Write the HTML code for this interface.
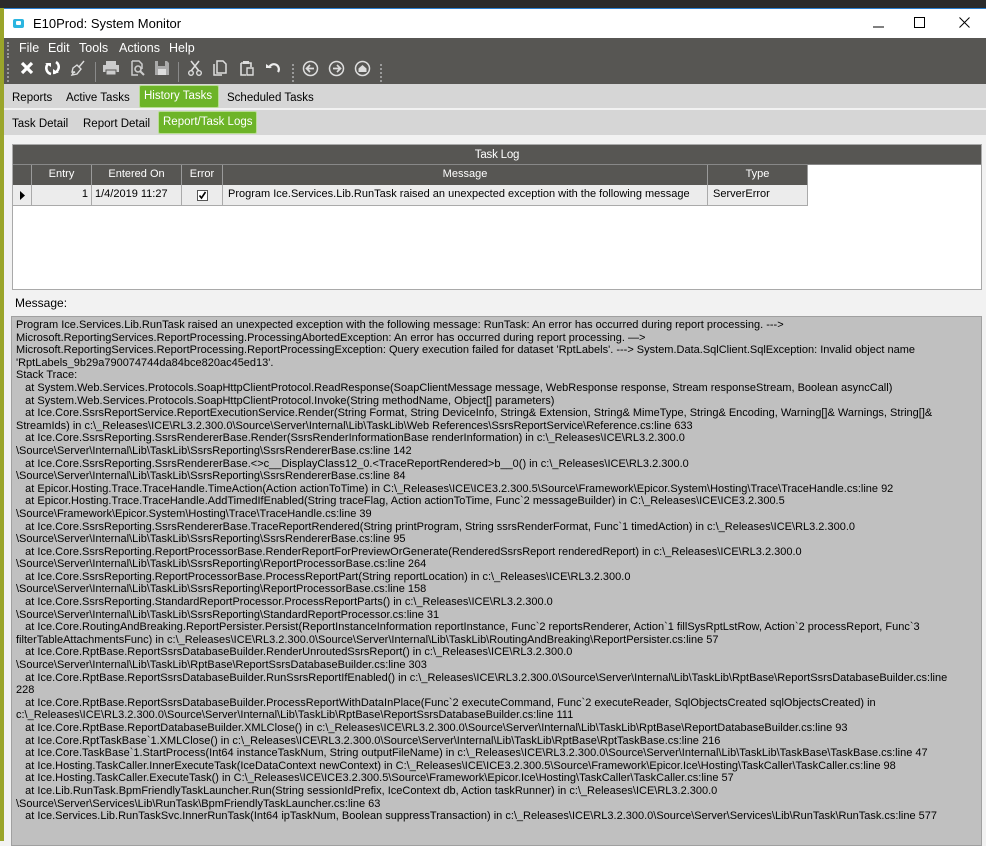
<!DOCTYPE html>
<html><head><meta charset="utf-8">
<style>
*{margin:0;padding:0;box-sizing:border-box}
body{width:986px;height:841px;overflow:hidden;background:#f2f2f2;font-family:"Liberation Sans",Arial,sans-serif;position:relative}
.abs{position:absolute}
#top{left:0;top:0;width:986px;height:8px;background:#2b2b2b}
#lstrip{left:0;top:8px;width:4px;height:833px;background:#9aa52a}
#title{left:4px;top:8px;width:982px;height:30px;background:#fff;border-top:1px solid #2a7fd0}
#title .t{position:absolute;left:29px;top:7px;font-size:13px;color:#000}
#title .ic{position:absolute;left:9px;top:10px;width:11px;height:9px;background:#2bb5e0;border-radius:2px}
#title .ic:after{content:"";position:absolute;left:3px;top:2px;width:5px;height:4px;background:#fff;border-radius:1px}
#menubar{left:4px;top:38px;width:982px;height:46px;background:#575653}
.menu{position:absolute;top:3px;font-size:12.5px;color:#fff}
.grip{position:absolute;width:2px;border-left:2px dotted #9a9a9a}
.sep{position:absolute;top:24px;width:1px;height:20px;background:#8a8a8a}
.ico{position:absolute;top:22px}
#tabs{left:4px;top:84px;width:982px;height:25px;background:#d6d6d6}
#tabs2{left:4px;top:110px;width:982px;height:25px;background:#d6d6d6}
#div{left:4px;top:108px;width:982px;height:2px;background:#f2f2f2}
.tab{position:absolute;font-size:11.5px;color:#000;top:8px}
.tsel{position:absolute;background:#6db428;border:1px solid #b9dd95;color:#fff;font-size:11.5px;padding:4px 0 0 4px;border-radius:2px}
#grid{left:12px;top:144px;width:970px;height:146px;background:#fff;border:1px solid #a9a9a9}
.hd{background:#575653;color:#fff;font-size:11.5px;letter-spacing:-.2px}
.cell{position:absolute;height:20px;border-right:1px solid #9a9a9a;font-size:11px;letter-spacing:0;line-height:18px}
#msglbl{left:15px;top:296px;font-size:12px;color:#000}
#msg{left:11px;top:316px;width:971px;height:530px;background:#c0c0c0;border:1px solid #a0a0a0;padding:2px 0 0 4px;font-size:11px;letter-spacing:0;line-height:12.6px;color:#000;white-space:pre;overflow:hidden}
</style></head><body>
<div class="abs" id="top"></div>
<div class="abs" id="lstrip"></div>
<div class="abs" id="title"><div class="ic"></div><div class="t">E10Prod: System Monitor</div>
<svg style="position:absolute;left:869px;top:12px" width="12" height="12"><line x1="0" y1="6" x2="11" y2="6" stroke="#000"/></svg>
<svg style="position:absolute;left:910px;top:8px" width="12" height="12"><rect x=".5" y=".5" width="10" height="10" fill="none" stroke="#000"/></svg>
<svg style="position:absolute;left:955px;top:8px" width="12" height="12"><path d="M.5 .5L10.5 10.5M10.5 .5L.5 10.5" stroke="#000"/></svg>
</div>
<div class="abs" id="menubar">
<div class="grip" style="left:3px;top:4px;height:16px"></div>
<span class="menu" style="left:15px">File</span><span class="menu" style="left:44px">Edit</span><span class="menu" style="left:75px">Tools</span><span class="menu" style="left:115px">Actions</span><span class="menu" style="left:165px">Help</span>
<div class="grip" style="left:3px;top:26px;height:18px"></div>
<svg class="ico" style="left:15px" width="16" height="16"><path d="M3 3L13 13M13 3L3 13" stroke="#fff" stroke-width="3.2"/></svg>
<svg class="ico" style="left:40px" width="16" height="16"><path d="M4 4A6 6 0 0 0 7 14M12 2A6 6 0 0 1 9 13" stroke="#fff" stroke-width="2.6" fill="none"/><path d="M1 3h6v4z M15 13H9V9z" fill="#fff"/></svg>
<svg class="ico" style="left:66px" width="16" height="16"><path d="M14 1L9 7M3 8l4-3 4 4-4 5-5 1 1-2 2-1-3 0z" stroke="#ddd" stroke-width="1.4" fill="none"/></svg>
<div class="sep" style="left:91px"></div>
<svg class="ico" style="left:98px" width="18" height="16"><rect x="4" y="1" width="10" height="4" fill="#ccc"/><rect x="1" y="5" width="16" height="7" fill="#ccc"/><rect x="4" y="10" width="10" height="5" fill="#ccc" stroke="#575653"/></svg>
<svg class="ico" style="left:125px" width="16" height="16"><path d="M3 1h7l3 3v5M3 1v14h6" stroke="#ccc" stroke-width="1.5" fill="none"/><circle cx="9" cy="9" r="3" stroke="#ccc" stroke-width="1.6" fill="none"/><path d="M11 11l4 4" stroke="#ccc" stroke-width="2"/></svg>
<svg class="ico" style="left:150px" width="16" height="16"><path d="M1 1h12l2 2v12H1z" fill="#aaa"/><rect x="4" y="1" width="7" height="5" fill="#575653"/><rect x="4" y="9" width="8" height="6" fill="#ddd"/></svg>
<div class="sep" style="left:174px"></div>
<svg class="ico" style="left:183px" width="16" height="16"><path d="M4 1l8 10M12 1L4 11" stroke="#ddd" stroke-width="1.6"/><circle cx="4" cy="13" r="2.3" stroke="#ddd" fill="none" stroke-width="1.4"/><circle cx="12" cy="13" r="2.3" stroke="#ddd" fill="none" stroke-width="1.4"/></svg>
<svg class="ico" style="left:208px" width="16" height="16"><path d="M5 1h6l3 3v9H5z M2 4v11h8" stroke="#ddd" stroke-width="1.5" fill="none"/></svg>
<svg class="ico" style="left:235px" width="16" height="16"><path d="M2 3h10v4M2 3v12h5" stroke="#ddd" stroke-width="1.6" fill="none"/><rect x="4" y="1" width="6" height="3" fill="#ddd"/><path d="M8 8h6v7H8z" stroke="#ddd" stroke-width="1.4" fill="none"/></svg>
<svg class="ico" style="left:261px" width="16" height="16"><path d="M4 8a5 5 0 1 1 9 4" stroke="#eee" stroke-width="2.2" fill="none"/><path d="M1 4l6 4H1z" fill="#eee"/></svg>
<div class="grip" style="left:288px;top:26px;height:18px"></div>
<svg class="ico" style="left:298px" width="17" height="17"><circle cx="8.5" cy="8.5" r="7" stroke="#ddd" stroke-width="1.5" fill="none"/><path d="M12 8.5H5M8 5l-3.5 3.5L8 12" stroke="#ddd" stroke-width="1.7" fill="none"/></svg>
<svg class="ico" style="left:324px" width="17" height="17"><circle cx="8.5" cy="8.5" r="7" stroke="#ddd" stroke-width="1.5" fill="none"/><path d="M5 8.5h7M9 5l3.5 3.5L9 12" stroke="#ddd" stroke-width="1.7" fill="none"/></svg>
<svg class="ico" style="left:350px" width="17" height="17"><circle cx="8.5" cy="8.5" r="7" stroke="#ddd" stroke-width="1.5" fill="none"/><path d="M4.5 8.5L8.5 5l4 3.5V12h-8z" fill="#ddd"/></svg>
<div class="grip" style="left:376px;top:26px;height:18px"></div>
</div>
<div class="abs" id="tabs">
<span class="tab" style="left:8px">Reports</span><span class="tab" style="left:62px">Active Tasks</span>
<div class="tsel" style="left:135px;top:1px;width:80px;height:23px">History Tasks</div>
<span class="tab" style="left:223px">Scheduled Tasks</span>
</div>
<div class="abs" id="div"></div>
<div class="abs" id="tabs2">
<span class="tab" style="left:8px;top:8px">Task Detail</span><span class="tab" style="left:79px;top:8px">Report Detail</span>
<div class="tsel" style="left:154px;top:1px;width:99px;height:23px">Report/Task Logs</div>
</div>
<div class="abs" id="grid">
<div class="abs hd" style="left:0;top:0;width:968px;height:20px;text-align:center;line-height:20px;border-bottom:1px solid #888">Task Log</div>
<div class="abs hd" style="left:0;top:20px;width:795px;height:20px"></div>
<div class="cell hd" style="left:0;top:20px;width:19px"></div>
<div class="cell hd" style="left:19px;top:20px;width:60px;text-align:center">Entry</div>
<div class="cell hd" style="left:79px;top:20px;width:90px;text-align:center">Entered On</div>
<div class="cell hd" style="left:169px;top:20px;width:41px;text-align:center">Error</div>
<div class="cell hd" style="left:210px;top:20px;width:485px;text-align:center">Message</div>
<div class="cell hd" style="left:695px;top:20px;width:100px;text-align:center">Type</div>
<div class="abs" style="left:0;top:40px;width:795px;height:21px;background:#ececec;border-bottom:1px solid #aaa"></div>
<div class="cell" style="left:0;top:40px;width:19px;border-color:#aaa"><svg style="position:absolute;left:7px;top:6px" width="5" height="9"><path d="M0 0l5 4.5L0 9z" fill="#000"/></svg></div>
<div class="cell" style="left:19px;top:40px;width:60px;text-align:right;padding-right:3px;border-color:#aaa">1</div>
<div class="cell" style="left:79px;top:40px;width:90px;padding-left:3px;border-color:#aaa">1/4/2019 11:27</div>
<div class="cell" style="left:169px;top:40px;width:41px;border-color:#aaa"><svg style="position:absolute;left:15px;top:5px" width="11" height="11"><rect x=".5" y=".5" width="10" height="10" fill="#fff" stroke="#555"/><path d="M2.5 5.5l2 2.5 4-6" stroke="#000" stroke-width="1.6" fill="none"/></svg></div>
<div class="cell" style="left:210px;top:40px;width:485px;padding-left:5px;border-color:#aaa;white-space:nowrap;overflow:hidden">Program Ice.Services.Lib.RunTask raised an unexpected exception with the following message</div>
<div class="cell" style="left:695px;top:40px;width:100px;padding-left:5px;border-color:#aaa">ServerError</div>
</div>
<div class="abs" id="msglbl">Message:</div>
<div class="abs" id="msg">Program Ice.Services.Lib.RunTask raised an unexpected exception with the following message: RunTask: An error has occurred during report processing. ---&gt;
Microsoft.ReportingServices.ReportProcessing.ProcessingAbortedException: An error has occurred during report processing. —&gt;
Microsoft.ReportingServices.ReportProcessing.ReportProcessingException: Query execution failed for dataset 'RptLabels'. ---&gt; System.Data.SqlClient.SqlException: Invalid object name
'RptLabels_9b29a790074744da84bce820ac45ed13'.
Stack Trace:
   at System.Web.Services.Protocols.SoapHttpClientProtocol.ReadResponse(SoapClientMessage message, WebResponse response, Stream responseStream, Boolean asyncCall)
   at System.Web.Services.Protocols.SoapHttpClientProtocol.Invoke(String methodName, Object[] parameters)
   at Ice.Core.SsrsReportService.ReportExecutionService.Render(String Format, String DeviceInfo, String&amp; Extension, String&amp; MimeType, String&amp; Encoding, Warning[]&amp; Warnings, String[]&amp;
StreamIds) in c:\_Releases\ICE\RL3.2.300.0\Source\Server\Internal\Lib\TaskLib\Web References\SsrsReportService\Reference.cs:line 633
   at Ice.Core.SsrsReporting.SsrsRendererBase.Render(SsrsRenderInformationBase renderInformation) in c:\_Releases\ICE\RL3.2.300.0
\Source\Server\Internal\Lib\TaskLib\SsrsReporting\SsrsRendererBase.cs:line 142
   at Ice.Core.SsrsReporting.SsrsRendererBase.&lt;&gt;c__DisplayClass12_0.&lt;TraceReportRendered&gt;b__0() in c:\_Releases\ICE\RL3.2.300.0
\Source\Server\Internal\Lib\TaskLib\SsrsReporting\SsrsRendererBase.cs:line 84
   at Epicor.Hosting.Trace.TraceHandle.TimeAction(Action actionToTime) in C:\_Releases\ICE\ICE3.2.300.5\Source\Framework\Epicor.System\Hosting\Trace\TraceHandle.cs:line 92
   at Epicor.Hosting.Trace.TraceHandle.AddTimedIfEnabled(String traceFlag, Action actionToTime, Func`2 messageBuilder) in C:\_Releases\ICE\ICE3.2.300.5
\Source\Framework\Epicor.System\Hosting\Trace\TraceHandle.cs:line 39
   at Ice.Core.SsrsReporting.SsrsRendererBase.TraceReportRendered(String printProgram, String ssrsRenderFormat, Func`1 timedAction) in c:\_Releases\ICE\RL3.2.300.0
\Source\Server\Internal\Lib\TaskLib\SsrsReporting\SsrsRendererBase.cs:line 95
   at Ice.Core.SsrsReporting.ReportProcessorBase.RenderReportForPreviewOrGenerate(RenderedSsrsReport renderedReport) in c:\_Releases\ICE\RL3.2.300.0
\Source\Server\Internal\Lib\TaskLib\SsrsReporting\ReportProcessorBase.cs:line 264
   at Ice.Core.SsrsReporting.ReportProcessorBase.ProcessReportPart(String reportLocation) in c:\_Releases\ICE\RL3.2.300.0
\Source\Server\Internal\Lib\TaskLib\SsrsReporting\ReportProcessorBase.cs:line 158
   at Ice.Core.SsrsReporting.StandardReportProcessor.ProcessReportParts() in c:\_Releases\ICE\RL3.2.300.0
\Source\Server\Internal\Lib\TaskLib\SsrsReporting\StandardReportProcessor.cs:line 31
   at Ice.Core.RoutingAndBreaking.ReportPersister.Persist(ReportInstanceInformation reportInstance, Func`2 reportsRenderer, Action`1 fillSysRptLstRow, Action`2 processReport, Func`3
filterTableAttachmentsFunc) in c:\_Releases\ICE\RL3.2.300.0\Source\Server\Internal\Lib\TaskLib\RoutingAndBreaking\ReportPersister.cs:line 57
   at Ice.Core.RptBase.ReportSsrsDatabaseBuilder.RenderUnroutedSsrsReport() in c:\_Releases\ICE\RL3.2.300.0
\Source\Server\Internal\Lib\TaskLib\RptBase\ReportSsrsDatabaseBuilder.cs:line 303
   at Ice.Core.RptBase.ReportSsrsDatabaseBuilder.RunSsrsReportIfEnabled() in c:\_Releases\ICE\RL3.2.300.0\Source\Server\Internal\Lib\TaskLib\RptBase\ReportSsrsDatabaseBuilder.cs:line
228
   at Ice.Core.RptBase.ReportSsrsDatabaseBuilder.ProcessReportWithDataInPlace(Func`2 executeCommand, Func`2 executeReader, SqlObjectsCreated sqlObjectsCreated) in
c:\_Releases\ICE\RL3.2.300.0\Source\Server\Internal\Lib\TaskLib\RptBase\ReportSsrsDatabaseBuilder.cs:line 111
   at Ice.Core.RptBase.ReportDatabaseBuilder.XMLClose() in c:\_Releases\ICE\RL3.2.300.0\Source\Server\Internal\Lib\TaskLib\RptBase\ReportDatabaseBuilder.cs:line 93
   at Ice.Core.RptTaskBase`1.XMLClose() in c:\_Releases\ICE\RL3.2.300.0\Source\Server\Internal\Lib\TaskLib\RptBase\RptTaskBase.cs:line 216
   at Ice.Core.TaskBase`1.StartProcess(Int64 instanceTaskNum, String outputFileName) in c:\_Releases\ICE\RL3.2.300.0\Source\Server\Internal\Lib\TaskLib\TaskBase\TaskBase.cs:line 47
   at Ice.Hosting.TaskCaller.InnerExecuteTask(IceDataContext newContext) in C:\_Releases\ICE\ICE3.2.300.5\Source\Framework\Epicor.Ice\Hosting\TaskCaller\TaskCaller.cs:line 98
   at Ice.Hosting.TaskCaller.ExecuteTask() in C:\_Releases\ICE\ICE3.2.300.5\Source\Framework\Epicor.Ice\Hosting\TaskCaller\TaskCaller.cs:line 57
   at Ice.Lib.RunTask.BpmFriendlyTaskLauncher.Run(String sessionIdPrefix, IceContext db, Action taskRunner) in c:\_Releases\ICE\RL3.2.300.0
\Source\Server\Services\Lib\RunTask\BpmFriendlyTaskLauncher.cs:line 63
   at Ice.Services.Lib.RunTaskSvc.InnerRunTask(Int64 ipTaskNum, Boolean suppressTransaction) in c:\_Releases\ICE\RL3.2.300.0\Source\Server\Services\Lib\RunTask\RunTask.cs:line 577</div>
</body></html>
